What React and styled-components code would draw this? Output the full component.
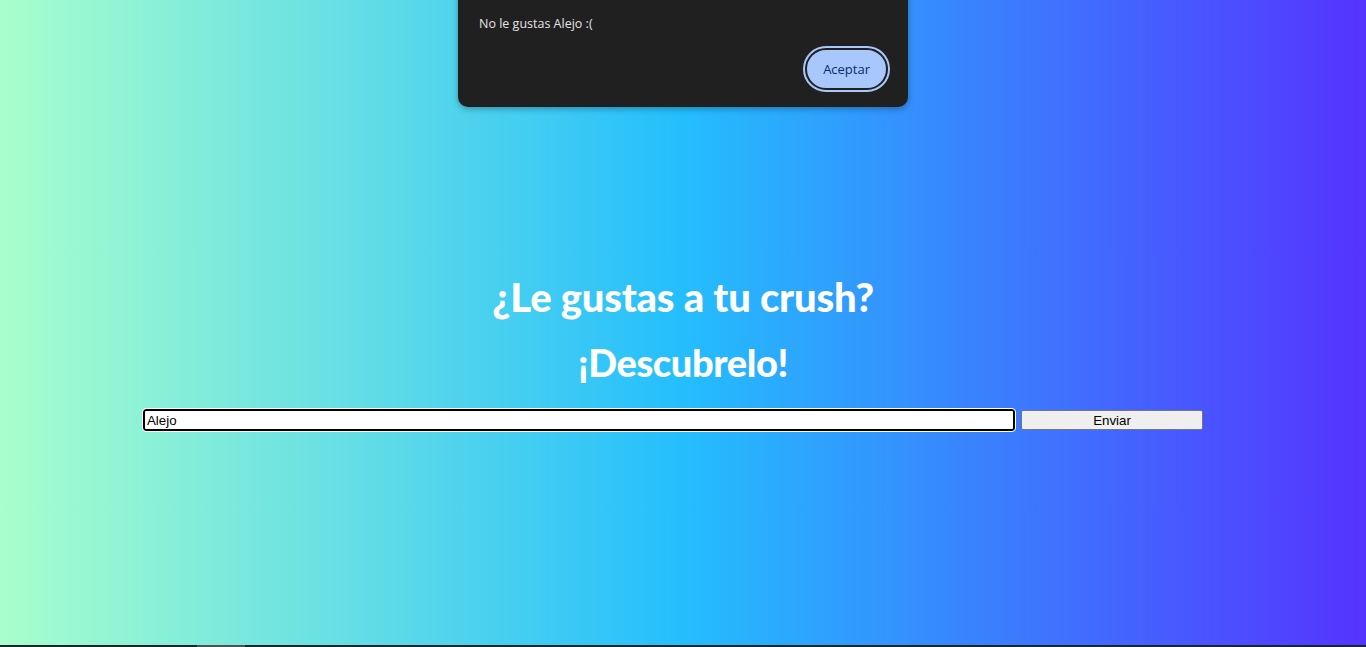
import React from "react";
import styled, { createGlobalStyle } from "styled-components";

const Global = createGlobalStyle`
	html, body {
		margin: 0;
		padding: 0;
		height: 100%;
		overflow: hidden;
	}
	#root {
		height: 100%;
	}
`;

export default function App(){
	return (
		<>
			<Global />
			<Screen>
				<Main>
					<Title>¿Le gustas a tu crush?</Title>
					<SubTitle>¡Descubrelo!</SubTitle>
					<Form onSubmit={e => e.preventDefault()}>
						<NameInput type="text" defaultValue="Alejo" />
						<SendButton type="submit">Enviar</SendButton>
					</Form>
				</Main>
				<BottomBar>
					<Thumb />
				</BottomBar>
				<Dialog>
					<DialogTitle>Esta página dice</DialogTitle>
					<DialogMessage>No le gustas Alejo :(</DialogMessage>
					<DialogActions>
						<AcceptButton>Aceptar</AcceptButton>
					</DialogActions>
				</Dialog>
			</Screen>
		</>
	)
}

const Screen = styled.div`
	position: relative;
	display: flex;
	flex-direction: column;
	width: 100%;
	height: 647px;
	background: linear-gradient(90deg, #a8ffcc 0%, #24befd 50%, #5533ff 100%);
	font-family: "Liberation Sans", Arial, sans-serif;
`;

const Main = styled.div`
	flex: 1;
	display: flex;
	flex-direction: column;
	align-items: center;
	padding-top: 272px;
`;

const Title = styled.h1`
	margin: 0;
	color: #ffffff;
	font-family: "Lato", "Liberation Sans", sans-serif;
	font-weight: 900;
	font-size: 40px;
	line-height: 50px;
	letter-spacing: -0.2px;
`;

const SubTitle = styled(Title)`
	margin-top: 15px;
	font-size: 38px;
	letter-spacing: -0.4px;
`;

const Form = styled.form`
	display: flex;
	align-self: flex-start;
	gap: 6px;
	margin: 22px 0 0 143px;
`;

const NameInput = styled.input`
	box-sizing: border-box;
	width: 872px;
	height: 22px;
	padding: 1px 2px;
	border: 2px solid #000000;
	border-radius: 3px;
	outline: 1px solid #ffffff;
	background: #ffffff;
	color: #000000;
	font-family: "Liberation Sans", Arial, sans-serif;
	font-size: 13.3px;
`;

const SendButton = styled.button`
	box-sizing: border-box;
	width: 182px;
	height: 20px;
	margin-top: 1px;
	padding: 0;
	border: 1px solid #767676;
	border-radius: 2px;
	background: #efefef;
	color: #000000;
	font-family: "Liberation Sans", Arial, sans-serif;
	font-size: 13.3px;
`;

const BottomBar = styled.div`
	height: 2px;
	background: #17282a;
	position: relative;
`;

const Thumb = styled.div`
	position: absolute;
	left: 197px;
	top: 0;
	width: 48px;
	height: 2px;
	background: #4a5252;
`;

const Dialog = styled.div`
	position: absolute;
	top: -26px;
	left: 458px;
	box-sizing: border-box;
	width: 450px;
	padding: 8px 20px 17px 21px;
	background: #202020;
	border-radius: 10px;
	box-shadow: 0 2px 6px rgba(0, 0, 0, 0.3);
	color: #e3e3e3;
	font-family: "Open Sans", "Noto Sans", sans-serif;
`;

const DialogTitle = styled.div`
	margin-top: -3px;
	padding-left: 36px;
	font-size: 17px;
	line-height: 22px;
	color: #ffffff;
`;

const DialogMessage = styled.div`
	margin-top: 15px;
	font-size: 12.5px;
	line-height: 16px;
`;

const DialogActions = styled.div`
	display: flex;
	justify-content: flex-end;
	margin-top: 16px;
`;

const AcceptButton = styled.button`
	box-sizing: border-box;
	height: 42px;
	padding: 0 16px;
	border: 2px solid #202020;
	border-radius: 22px;
	outline: 2px solid #a8c7fa;
	outline-offset: 0;
	background: #a8c7fa;
	color: #062e6f;
	font-family: "Open Sans", "Noto Sans", sans-serif;
	font-size: 13px;
`;
